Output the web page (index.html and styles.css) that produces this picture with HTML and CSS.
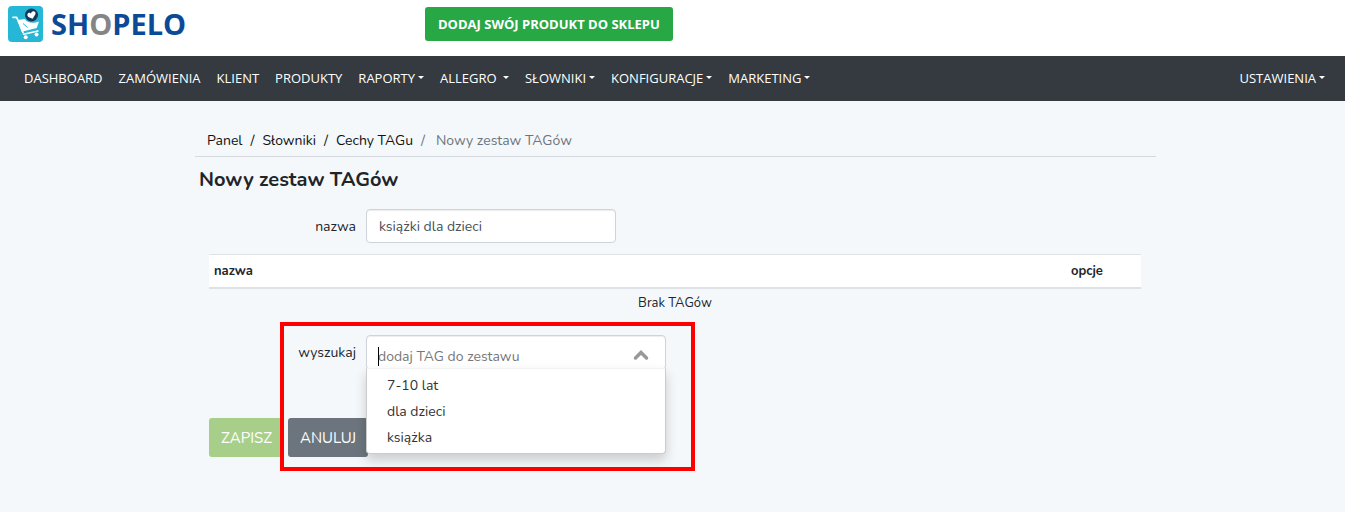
FILE: index.html
```html
<!DOCTYPE html>
<html lang="pl">
<head>
<meta charset="utf-8">
<meta name="viewport" content="width=device-width, initial-scale=1">
<title>Shopelo - Nowy zestaw TAGów</title>
<link rel="stylesheet" href="styles.css">
</head>
<body>
<header class="header">
  <a class="brand" href="#">
    <svg class="brand-icon" viewBox="0 0 35 36" aria-hidden="true">
      <rect width="35" height="36" rx="4" fill="#25b7d5"/>
      <path d="M5 11.300h3.700l6.300 15.200" fill="none" stroke="#fff" stroke-width="1.700" stroke-linejoin="round" stroke-linecap="round"/>
      <path d="M9.500 14l7.500-1c2 3.800 8 5 14 2.500l-2.300 6.500-15 3.800z" fill="#fff"/>
      <path d="M15 17.500l4.500 4" stroke="#25b7d5" stroke-width="1"/>
      <path d="M15.500 28.300l14.500-3.300" stroke="#fff" stroke-width="1.500" stroke-linecap="round"/>
      <circle cx="17.700" cy="31.200" r="2" fill="#fff"/>
      <circle cx="28.500" cy="28.500" r="2" fill="#fff"/>
      <circle cx="23.500" cy="9" r="6.500" fill="#14395b"/>
      <path d="M24.600 12.700l-4.300-1.700c-2.300-2.600.3-5.300 2.700-3.600.8-3.400 5.400-2.700 4.400.9z" fill="#fff"/>
    </svg>
    <span class="brand-name">SH<span class="brand-o">O</span>PELO</span>
  </a>
  <button class="btn-add" type="button">DODAJ SWÓJ PRODUKT DO SKLEPU</button>
</header>
<nav class="navbar">
  <a href="#">DASHBOARD</a>
  <a href="#">ZAMÓWIENIA</a>
  <a href="#">KLIENT</a>
  <a href="#">PRODUKTY</a>
  <a class="has-menu" href="#">RAPORTY</a>
  <a class="has-menu" href="#">ALLEGRO&nbsp;</a>
  <a class="has-menu" href="#">SŁOWNIKI</a>
  <a class="has-menu" href="#">KONFIGURACJE</a>
  <a class="has-menu" href="#">MARKETING</a>
  <a class="has-menu nav-end" href="#">USTAWIENIA</a>
</nav>
<main class="page">
  <div class="breadcrumb">
    <a href="#">Panel</a><span>/</span><a href="#">Słowniki</a><span>/</span><a href="#">Cechy TAGu</a><span class="muted">/</span><span class="muted current">Nowy zestaw TAGów</span>
  </div>
  <h1 class="title">Nowy zestaw TAGów</h1>
  <form class="form">
    <div class="row">
      <label for="name">nazwa</label>
      <input class="control" id="name" type="text" value="książki dla dzieci">
    </div>
    <table class="tags">
      <thead><tr><th>nazwa</th><th class="options">opcje</th></tr></thead>
      <tbody><tr><td colspan="2">Brak TAGów</td></tr></tbody>
    </table>
    <div class="row search-row">
      <label for="search">wyszukaj</label>
      <div class="combo">
        <input class="control combo-input" id="search" type="text" placeholder="dodaj TAG do zestawu">
        <span class="caret"></span>
        <svg class="chevron" viewBox="0 0 16 12" aria-hidden="true"><path d="M2.500 9L8 3.500 13.500 9" fill="none" stroke="#999" stroke-width="3.500" stroke-linecap="round"/></svg>
        <ul class="menu">
          <li>7-10 lat</li>
          <li>dla dzieci</li>
          <li>książka</li>
        </ul>
      </div>
      <div class="highlight"></div>
    </div>
    <div class="actions">
      <button class="btn save" type="submit">ZAPISZ</button>
      <button class="btn cancel" type="button">ANULUJ</button>
    </div>
  </form>
</main>
</body>
</html>
```
FILE: styles.css
```css
* { box-sizing: border-box; }
body {
  margin: 0;
  background: #f4f8fb;
  color: #212529;
  font-family: Nunito, "Noto Sans", sans-serif;
  font-size: 14px;
  line-height: 20px;
}
a { color: inherit; text-decoration: none; }
button, input { font-family: inherit; }

.header {
  display: grid;
  grid-template-columns: 31% 1fr;
  align-items: start;
  padding: 6px 8px 14px;
  background: #fff;
}
.brand { display: flex; align-items: center; gap: 8px; }
.brand-icon { width: 35px; height: 36px; }
.brand-name {
  color: #0b4a96;
  font: bold 29px/36px "Open Sans", sans-serif;
}
.brand-o { color: #858585; }
.btn-add {
  justify-self: start;
  margin: 1px 0 0 5px;
  height: 34px;
  padding: 0 13px;
  border: 0;
  border-radius: 3px;
  background: #28a745;
  color: #fff;
  font: bold 13px/20px "Open Sans", sans-serif;
}

.navbar {
  display: flex;
  align-items: center;
  gap: 16px;
  min-height: 45px;
  padding: 0 20px 2px 24px;
  background: #343a40;
  color: #fff;
  font-family: "Open Sans", sans-serif;
  font-size: 13px;
}
.has-menu { display: flex; align-items: center; gap: 3px; }
.has-menu::after {
  content: "";
  border: 3px solid transparent;
  border-top-color: #fff;
  border-bottom: 0;
}
.nav-end { margin-left: auto; }

.page { max-width: 967px; margin: 0 auto; padding: 30px 0 40px 6px; }
.breadcrumb {
  display: flex;
  gap: 8px;
  padding: 0 12px 5px;
  border-bottom: 1px solid #d3d9dd;
  color: #111;
}
.breadcrumb .muted { color: #6c757d; }
.breadcrumb .current { margin-left: 3px; }
.title { margin: 9px 4px 0; font-size: 20px; line-height: 28px; }

.form { padding: 15px 15px 0 14px; }
.row { display: flex; align-items: start; gap: 10px; }
.row label { width: 147px; padding-top: 8px; text-align: right; }
.control {
  width: 250px;
  height: 34px;
  padding: 0 12px;
  border: 1px solid #ced4da;
  border-radius: 4px;
  background: #fff;
  box-shadow: inset 0 1px 1px #00000013;
  color: #495057;
  font-size: 14px;
}
.control::placeholder { color: #777; opacity: 1; }

.tags { width: 100%; margin-top: 11px; border-collapse: separate; border-spacing: 0; }
.tags th {
  height: 35px;
  padding: 0 5px;
  border-top: 1px solid #dee2e6;
  border-bottom: 2px solid #dee2e6;
  background: #fff;
  font-size: 13px;
  text-align: left;
}
.tags .options { width: 75px; }
.tags td { padding: 4px 0; text-align: center; font-size: 13px; }

.search-row { position: relative; margin-top: 18px; }
.combo { position: relative; width: 300px; }
.combo-input { display: block; width: 100%; height: 35px; padding: 7px 11px 0; }
.caret { position: absolute; top: 12px; left: 12px; width: 1px; height: 19px; background: #000; }
.chevron { position: absolute; top: 14px; right: 17px; width: 16px; height: 12px; }
.menu {
  position: absolute;
  top: 33px;
  left: 0;
  z-index: 2;
  width: 100%;
  margin: 0;
  padding: 4px 0 2px;
  border: 1px solid #ccc;
  border-top-color: #f2f2f2;
  border-radius: 0 0 4px 4px;
  background: #fff;
  box-shadow: 0 6px 12px #0000002d;
  color: #333;
  list-style: none;
}
.menu li { padding: 3px 20px; }
.highlight {
  position: absolute;
  top: -13px;
  left: 71px;
  z-index: 3;
  width: 415px;
  height: 149px;
  border: 4px solid #f00;
  pointer-events: none;
}

.actions { display: flex; gap: 4px; margin-top: 48px; }
.btn {
  min-width: 75px;
  height: 39px;
  padding: 0 12px;
  border: 0;
  border-radius: 3px;
  color: #fff;
  font-size: 15px;
}
.save { background: #a7cf8a; }
.cancel { min-width: 80px; background: #6c757d; }
```
